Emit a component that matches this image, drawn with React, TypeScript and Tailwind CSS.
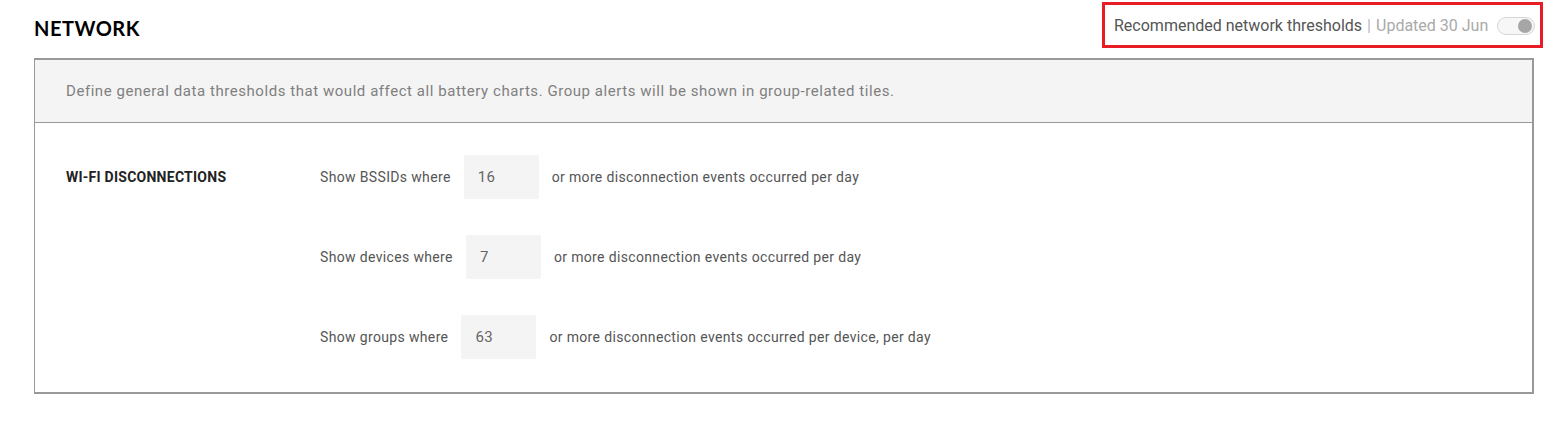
import React from "react";

interface RowProps {
  label: string;
  value: string;
  suffix: string;
}

const ThresholdRow = ({ label, value, suffix }: RowProps) => {
  return (
    <div className="flex h-[44px] items-center text-[14px] tracking-[0.35px] text-[#555555]">
      <span>{label}</span>
      <div className="ml-[13px] flex h-[44px] w-[75px] items-center rounded-[2px] bg-[#f4f4f4] pl-[14px] text-[15px] text-[#666666]">
        {value}
      </div>
      <span className="ml-[13px]">{suffix}</span>
    </div>
  );
};

export default function App() {
  return (
    <div
      className="h-[427px] w-[1567px] bg-white"
      style={{ fontFamily: "Roboto, 'Noto Sans', sans-serif" }}
    >
      <div className="flex items-center justify-between pl-[34px] pr-[24px] pt-[2px]">
        <h1
          className="mt-[6px] text-[20px] font-bold tracking-[0.5px] text-black"
          style={{ fontFamily: "Lato, 'DejaVu Sans', sans-serif" }}
        >
          NETWORK
        </h1>
        <div className="flex h-[46px] w-[441px] items-center border-[3px] border-[#e81c24] pl-[9px] pt-[1px] text-[16px]">
          <span className="text-[#555555]">Recommended network thresholds</span>
          <span className="mx-[5px] text-[#b7b3cf]">|</span>
          <span className="text-[#aaaaaa]">Updated 30 Jun</span>
          <div className="ml-[9px] flex h-[18px] w-[38px] items-center justify-end rounded-full border border-[#d6d6d6] bg-[#f7f7f7] pr-[2px]">
            <div className="h-[14px] w-[14px] rounded-full bg-[#a6a6a6]" />
          </div>
        </div>
      </div>
      <div className="ml-[34px] mt-[10px] w-[1500px] border-2 border-[#999999] border-l-[1px]">
        <div className="flex h-[63px] items-center border-b border-[#999999] bg-[#f4f4f4] pl-[31px] text-[15px] tracking-[0.55px] text-[#808080]">
          Define general data thresholds that would affect all battery charts. Group alerts will be shown in group-related tiles.
        </div>
        <div className="flex pb-[33px] pl-[31px] pt-[32px]">
          <div className="flex h-[44px] w-[254px] items-center text-[14px] font-bold tracking-[0.25px] text-[#222222]">
            WI-FI DISCONNECTIONS
          </div>
          <div className="flex flex-col gap-[36px]">
            <ThresholdRow
              label="Show BSSIDs where"
              value="16"
              suffix="or more disconnection events occurred per day"
            />
            <ThresholdRow
              label="Show devices where"
              value="7"
              suffix="or more disconnection events occurred per day"
            />
            <ThresholdRow
              label="Show groups where"
              value="63"
              suffix="or more disconnection events occurred per device, per day"
            />
          </div>
        </div>
      </div>
    </div>
  );
}
